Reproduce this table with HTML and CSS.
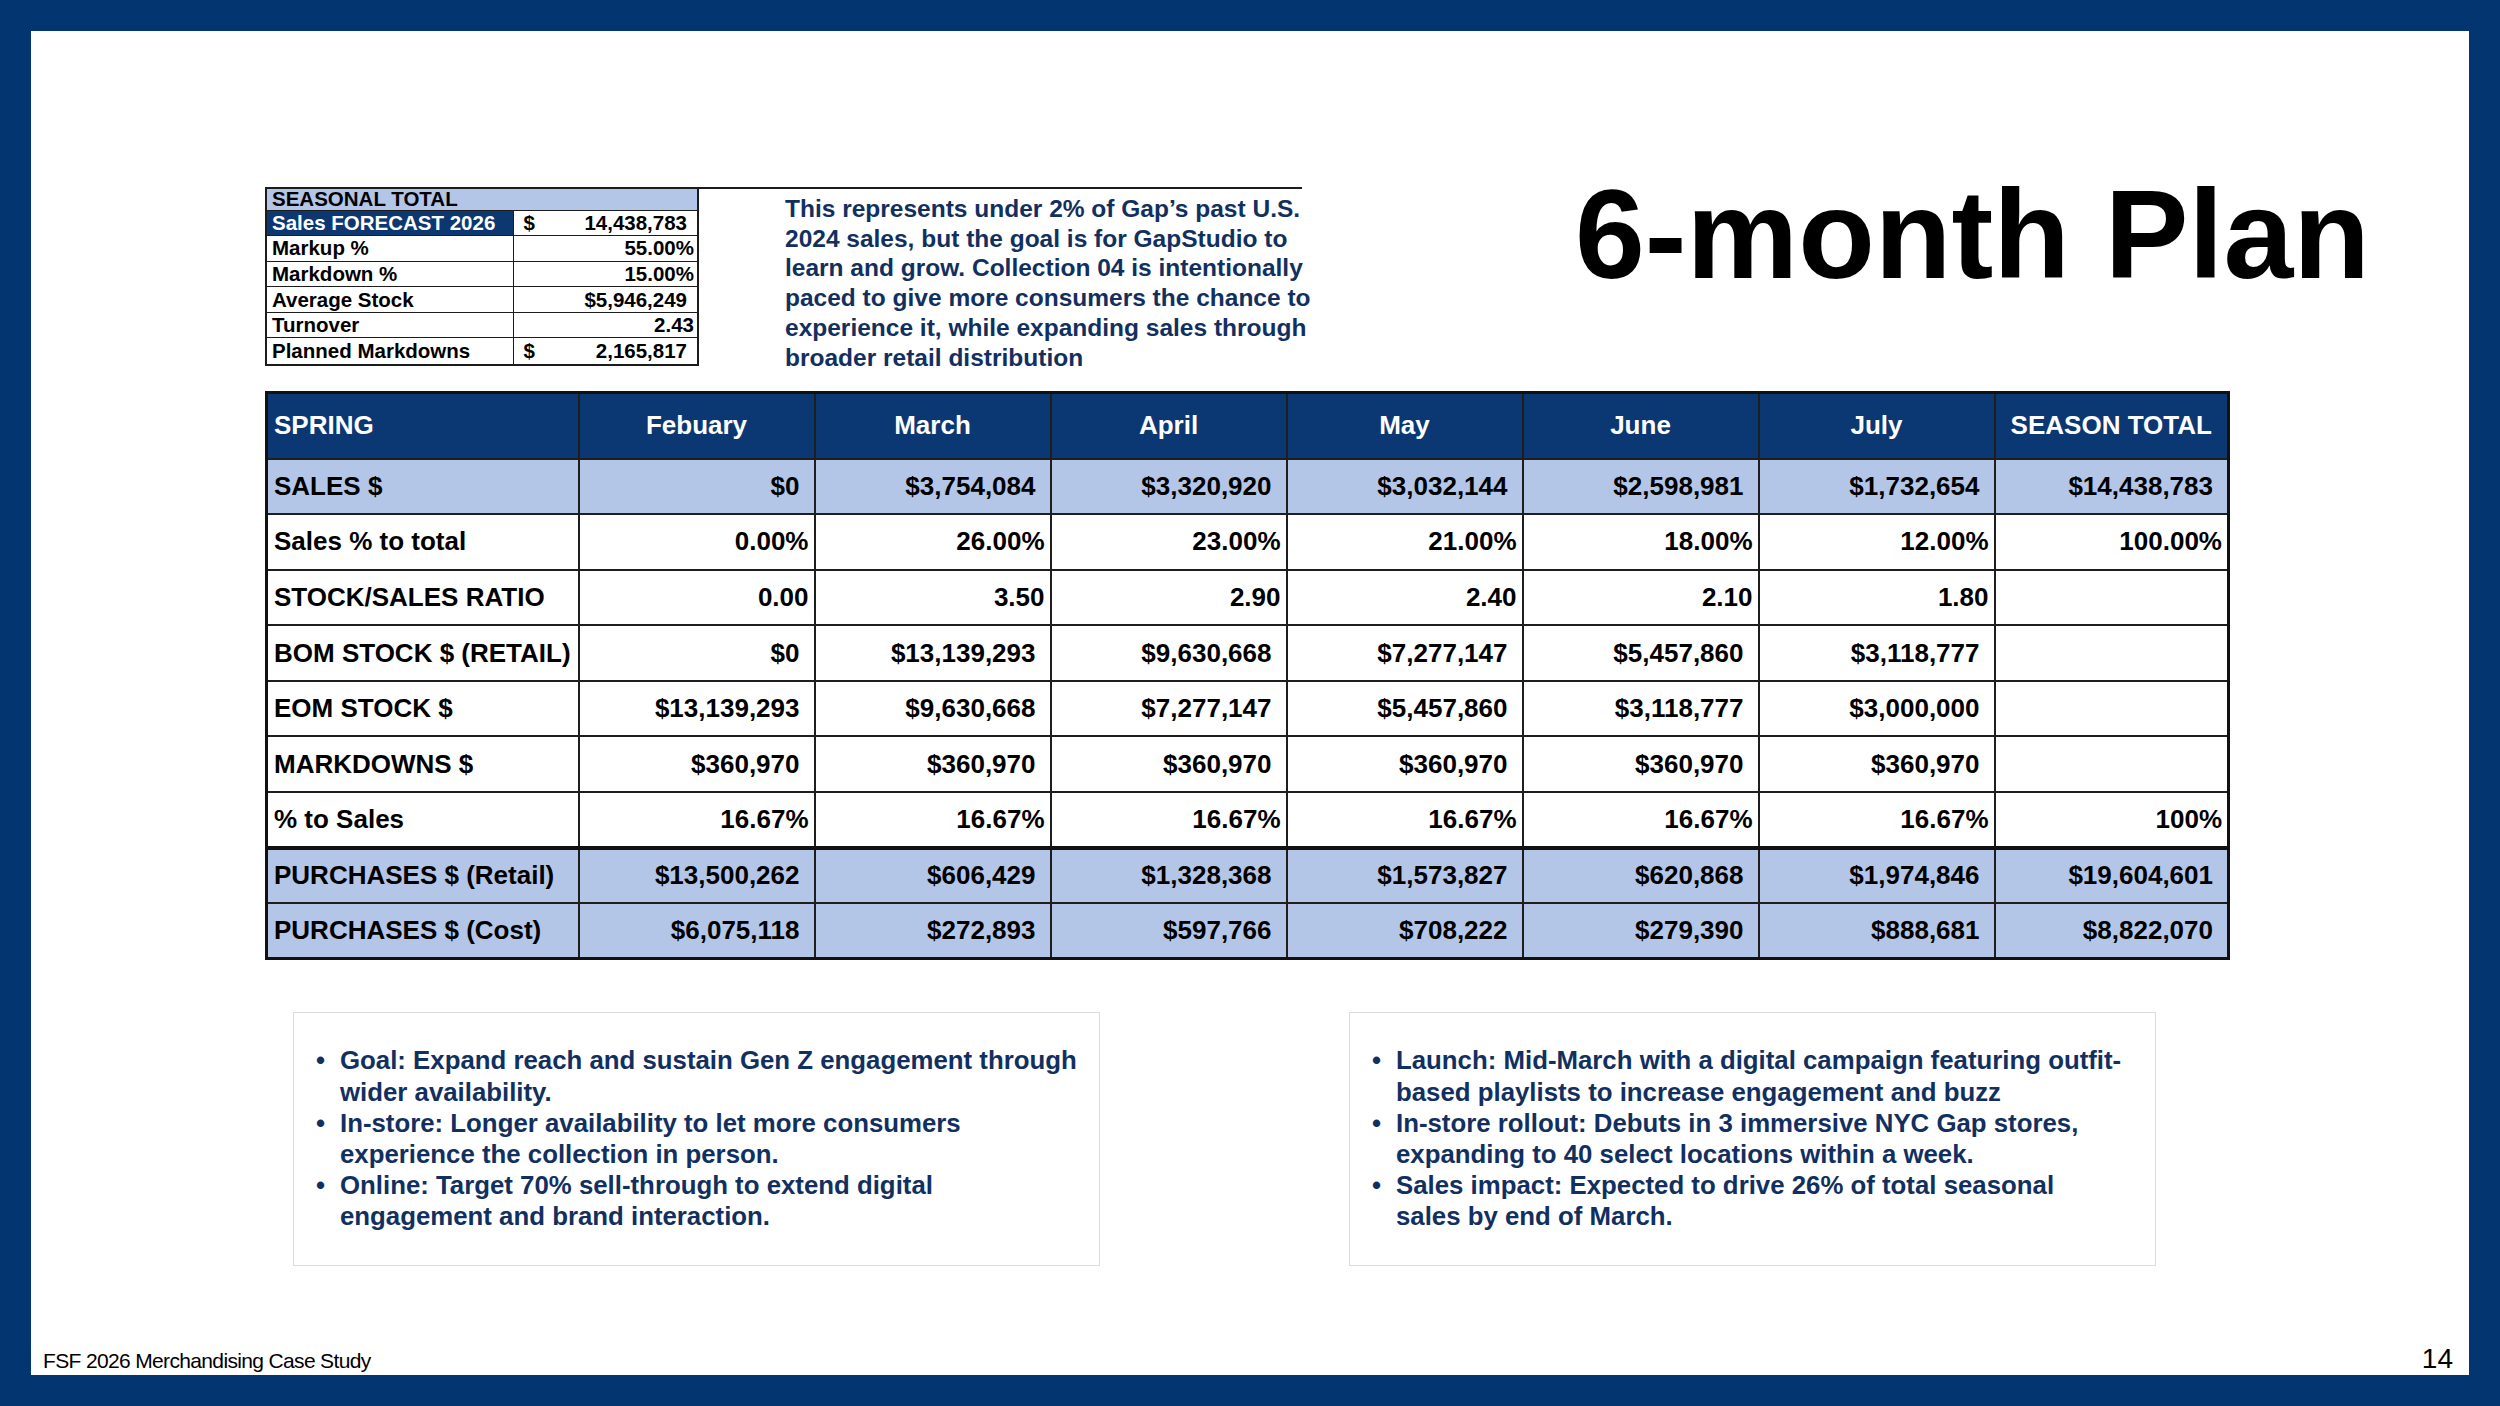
FILE: index.html
```html
<!DOCTYPE html>
<html lang="en">
<head>
<meta charset="utf-8">
<title>6-month Plan</title>
<link rel="stylesheet" href="styles.css">
</head>
<body>
<div class="slide">
  <div class="top">
    <div class="snip">
      <table class="mini">
        <colgroup><col class="mc1"><col class="mc2"></colgroup>
        <tr class="mhead"><td colspan="2">SEASONAL TOTAL</td></tr>
        <tr><td class="mlab dark">Sales FORECAST 2026</td><td class="acct"><span class="dl">$</span>14,438,783</td></tr>
        <tr><td class="mlab">Markup %</td><td class="pct">55.00%</td></tr>
        <tr><td class="mlab">Markdown %</td><td class="pct">15.00%</td></tr>
        <tr><td class="mlab">Average Stock</td><td class="acct">$5,946,249</td></tr>
        <tr><td class="mlab">Turnover</td><td class="pct">2.43</td></tr>
        <tr class="mlast"><td class="mlab">Planned Markdowns</td><td class="acct"><span class="dl">$</span>2,165,817</td></tr>
      </table>
      <p class="note">This represents under 2% of Gap’s past U.S.<br>2024 sales, but the goal is for GapStudio to<br>learn and grow. Collection 04 is intentionally<br>paced to give more consumers the chance to<br>experience it, while expanding sales through<br>broader retail distribution</p>
    </div>
    <h1 class="title">6-month Plan</h1>
  </div>

  <table class="plan">
    <colgroup><col class="c0"><col class="cm"><col class="cm"><col class="cm"><col class="cm"><col class="cm"><col class="cm"><col class="ct"></colgroup>
    <thead>
      <tr class="hd"><th class="lab">SPRING</th><th>Febuary</th><th>March</th><th>April</th><th>May</th><th>June</th><th>July</th><th>SEASON TOTAL</th></tr>
    </thead>
    <tbody>
      <tr class="hl"><td class="lab">SALES $</td><td class="cur">$0</td><td class="cur">$3,754,084</td><td class="cur">$3,320,920</td><td class="cur">$3,032,144</td><td class="cur">$2,598,981</td><td class="cur">$1,732,654</td><td class="cur">$14,438,783</td></tr>
      <tr><td class="lab">Sales % to total</td><td>0.00%</td><td>26.00%</td><td>23.00%</td><td>21.00%</td><td>18.00%</td><td>12.00%</td><td>100.00%</td></tr>
      <tr><td class="lab">STOCK/SALES RATIO</td><td>0.00</td><td>3.50</td><td>2.90</td><td>2.40</td><td>2.10</td><td>1.80</td><td></td></tr>
      <tr><td class="lab">BOM STOCK $ (RETAIL)</td><td class="cur">$0</td><td class="cur">$13,139,293</td><td class="cur">$9,630,668</td><td class="cur">$7,277,147</td><td class="cur">$5,457,860</td><td class="cur">$3,118,777</td><td></td></tr>
      <tr><td class="lab">EOM STOCK $</td><td class="cur">$13,139,293</td><td class="cur">$9,630,668</td><td class="cur">$7,277,147</td><td class="cur">$5,457,860</td><td class="cur">$3,118,777</td><td class="cur">$3,000,000</td><td></td></tr>
      <tr><td class="lab">MARKDOWNS $</td><td class="cur">$360,970</td><td class="cur">$360,970</td><td class="cur">$360,970</td><td class="cur">$360,970</td><td class="cur">$360,970</td><td class="cur">$360,970</td><td></td></tr>
      <tr><td class="lab">% to Sales</td><td>16.67%</td><td>16.67%</td><td>16.67%</td><td>16.67%</td><td>16.67%</td><td>16.67%</td><td>100%</td></tr>
      <tr class="hl sep"><td class="lab">PURCHASES $ (Retail)</td><td class="cur">$13,500,262</td><td class="cur">$606,429</td><td class="cur">$1,328,368</td><td class="cur">$1,573,827</td><td class="cur">$620,868</td><td class="cur">$1,974,846</td><td class="cur">$19,604,601</td></tr>
      <tr class="hl"><td class="lab">PURCHASES $ (Cost)</td><td class="cur">$6,075,118</td><td class="cur">$272,893</td><td class="cur">$597,766</td><td class="cur">$708,222</td><td class="cur">$279,390</td><td class="cur">$888,681</td><td class="cur">$8,822,070</td></tr>
    </tbody>
  </table>

  <div class="boxes">
    <div class="box">
      <ul>
        <li><span>Goal: Expand reach and sustain Gen Z engagement through<br>wider availability.</span></li>
        <li><span>In-store: Longer availability to let more consumers<br>experience the collection in person.</span></li>
        <li><span>Online: Target 70% sell-through to extend digital<br>engagement and brand interaction.</span></li>
      </ul>
    </div>
    <div class="box">
      <ul>
        <li><span>Launch: Mid-March with a digital campaign featuring outfit-<br>based playlists to increase engagement and buzz</span></li>
        <li><span>In-store rollout: Debuts in 3 immersive NYC Gap stores,<br>expanding to 40 select locations within a week.</span></li>
        <li><span>Sales impact: Expected to drive 26% of total seasonal<br>sales by end of March.</span></li>
      </ul>
    </div>
  </div>

  <div class="footer">
    <span class="foot-title">FSF 2026 Merchandising Case Study</span>
    <span class="page">14</span>
  </div>
</div>
</body>
</html>
```

FILE: styles.css
```css
* {
  box-sizing: border-box;
  margin: 0;
  padding: 0;
}

html, body {
  width: 2500px;
  height: 1406px;
  overflow: hidden;
}

body {
  background: #033670;
  padding: 31px;
  font-family: "Liberation Sans", Arial, sans-serif;
}

.slide {
  background: #ffffff;
  width: 2438px;
  height: 1344px;
  display: flex;
  flex-direction: column;
  padding: 141px 16px 0 12px;
}

/* ---------- top section ---------- */
.top {
  height: 219px;
  margin-left: 222px;
  display: flex;
  align-items: flex-start;
}

.snip {
  margin-top: 15px;
  width: 1037px;
  border-top: 2px solid #1c1c1c;
  display: flex;
  align-items: flex-start;
}

.mini {
  border-collapse: collapse;
  table-layout: fixed;
  width: 432px;
  font-size: 20.5px;
  font-weight: 700;
  color: #000;
  border-left: 2px solid #1c1c1c;
  border-right: 2px solid #1c1c1c;
  border-bottom: 2px solid #1c1c1c;
}

.mc1 { width: 247px; }
.mc2 { width: 185px; }

.mini td {
  height: 25.6px;
  line-height: 22px;
  padding: 0 5px;
  border: 1px solid #1c1c1c;
  white-space: nowrap;
}

.mini .mhead td {
  height: 21px;
  background: #b4c6e7;
  border-top: none;
  padding-left: 5px;
  line-height: 20px;
}

.mini .mlast td {
  height: 27px;
}

.mini .dark {
  background: #0c3771;
  color: #ffffff;
}

.mini .acct {
  text-align: right;
  padding-right: 10px;
}

.mini .pct {
  text-align: right;
  padding-right: 3px;
}

.mini .dl {
  float: left;
  padding-left: 5px;
}

.note {
  padding: 5px 0 0 86px;
  font-size: 24.5px;
  line-height: 29.7px;
  font-weight: 700;
  color: #12305f;
  white-space: nowrap;
}

.title {
  margin-left: 273px;
  font-size: 125.5px;
  line-height: 1;
  font-weight: 700;
  color: #000;
  white-space: nowrap;
}

/* ---------- plan table ---------- */
.plan {
  margin-left: 222px;
  width: 1962px;
  table-layout: fixed;
  border-collapse: collapse;
  border: 3px solid #111;
  font-size: 26px;
  font-weight: 700;
  color: #000;
}

.plan .c0 { width: 312px; }
.plan .cm { width: 236px; }
.plan .ct { width: 234px; }

.plan th,
.plan td {
  border: 2px solid #1e1e1e;
  white-space: nowrap;
  overflow: hidden;
}

.plan th {
  height: 66px;
  background: #0b3772;
  color: #ffffff;
  text-align: center;
  font-weight: 700;
}

.plan td {
  height: 55.6px;
  text-align: right;
  padding-right: 5px;
}

.plan td.cur {
  padding-right: 14px;
}

.plan .lab {
  text-align: left;
  padding-left: 6px;
  padding-right: 0;
}

.plan .hl td {
  background: #b4c6e7;
}

.plan .sep td {
  border-top: 4px solid #111;
}

/* ---------- bullet boxes ---------- */
.boxes {
  margin: 52px 0 0 250px;
  display: flex;
  gap: 249px;
}

.box {
  width: 807px;
  height: 254px;
  border: 1.5px solid #dcdcdc;
  padding: 32px 0 0 22px;
}

.box ul {
  list-style: none;
  font-size: 25.8px;
  line-height: 31.2px;
  font-weight: 700;
  color: #12305f;
  white-space: nowrap;
}

.box li {
  display: flex;
}

.box li::before {
  content: "\2022";
  width: 24px;
  flex: none;
}

/* ---------- footer ---------- */
.footer {
  margin-top: auto;
  display: flex;
  justify-content: space-between;
  align-items: baseline;
  color: #000;
}

.foot-title {
  font-size: 21px;
  letter-spacing: -0.65px;
  line-height: 28px;
}

.page {
  font-size: 28px;
  line-height: 28px;
}
```
